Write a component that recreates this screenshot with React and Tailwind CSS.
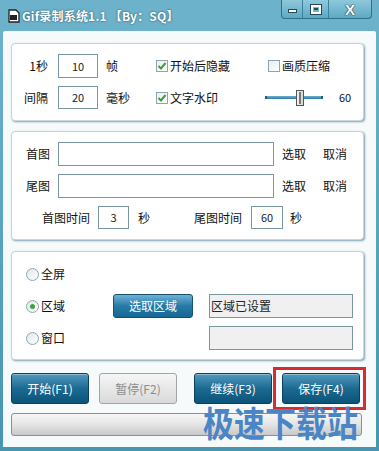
import React from "react";

const font = { fontFamily: '"SimSun", "Noto Sans CJK SC", "Liberation Sans", sans-serif' };

const Input = ({ w, h = "h-[24px]", value, gray }) => (
  <div
    className={`${w} ${h} flex items-center justify-center border border-[#7896a3] text-[11px] text-[#222] ${
      gray ? "bg-[#f0f0f0] justify-start pl-[1px] text-[12px]" : "bg-white"
    }`}
  >
    {value}
  </div>
);

const Check = ({ checked }) => (
  <div className="w-[12px] h-[12px] border border-[#8ea4ae] bg-gradient-to-br from-[#e8eef1] to-white flex items-center justify-center">
    {checked && (
      <svg width="10" height="10" viewBox="0 0 10 10">
        <path d="M1.5 5 L4 7.5 L8.5 2" stroke="#3f9b3c" strokeWidth="2" fill="none" />
      </svg>
    )}
  </div>
);

const Radio = ({ on }) => (
  <div className="w-[13px] h-[13px] rounded-full border border-[#8ea4ae] bg-gradient-to-br from-[#dfe6ea] to-white flex items-center justify-center">
    {on && <div className="w-[5px] h-[5px] rounded-full bg-[#3fa33a]" />}
  </div>
);

const BlueBtn = ({ children, w = "w-[78px]", h = "h-[31px]" }) => (
  <div
    className={`${w} ${h} rounded-[3px] border border-[#123f58] bg-gradient-to-b from-[#5199be] via-[#1b6a92] to-[#0b5479] flex items-center justify-center text-white text-[12px] leading-none shadow-[inset_0_1px_0_rgba(255,255,255,0.35)]`}
  >
    {children}
  </div>
);

const Panel = ({ children, className }) => (
  <div
    className={`ml-[8px] w-[353px] rounded-[4px] bg-white border border-[#c6d8de] shadow-[1px_1px_2px_rgba(30,90,110,0.55)] ${className}`}
  >
    {children}
  </div>
);

export default function App() {
  return (
    <div
      className="relative w-[379px] h-[451px] bg-gradient-to-b from-[#6db3cb] to-[#4795b1] flex flex-col text-[12px] text-[#111]"
      style={font}
    >
      {/* title bar */}
      <div className="relative h-[31px] flex items-center pl-[8px] shrink-0">
        <svg width="12" height="14" viewBox="0 0 12 14" className="mr-[2px]">
          <path d="M1 1 H8 L11 4 V13 H1 Z" fill="#fff" stroke="#222" strokeWidth="1.3" />
          <rect x="2" y="6" width="7" height="5" fill="#222" />
        </svg>
        <span
          className="text-white font-bold text-[12px] tracking-[0.2px] [text-shadow:0_0_2px_rgba(0,40,60,0.8)]"
          style={{ fontFamily: '"Noto Sans CJK SC", "Liberation Sans", sans-serif' }}
        >
          Gif录制系统1.1 【By：SQ】
        </span>
        <div className="absolute top-0 left-[281px] h-[19px] flex rounded-b-[4px] border border-t-0 border-[#2f6f88] bg-gradient-to-b from-[#8ec8db] to-[#5ea9c4] overflow-hidden">
          <div className="w-[21px] flex items-center justify-center border-r border-[#3f819a]">
            <div className="w-[9px] h-[4px] bg-white border border-[#25485a] mt-[3px]" />
          </div>
          <div className="w-[26px] flex items-center justify-center border-r border-[#3f819a]">
            <div className="w-[10px] h-[9px] border-2 border-white outline outline-1 outline-[#25485a] flex items-center justify-center">
              <div className="w-[4px] h-[2px] bg-[#25485a]" />
            </div>
          </div>
          <div className="w-[42px] flex items-center justify-center">
            <span
              className="text-white font-bold text-[15px] leading-none [text-shadow:0_0_1px_#1d3c4c,0_0_1px_#1d3c4c,0_0_1px_#1d3c4c]"
              style={{ fontFamily: '"Liberation Sans", sans-serif' }}
            >
              X
            </span>
          </div>
        </div>
      </div>

      {/* body */}
      <div className="flex-1 mx-[3px] mb-[4px] bg-[#f6fafb] rounded-t-[2px] flex flex-col pt-[12px]">
        {/* panel 1 */}
        <Panel className="h-[78px] pt-[10px] flex flex-col gap-[8px]">
          <div className="flex items-center h-[24px]">
            <div className="w-[36px] text-right">1秒</div>
            <div className="w-[10px]" />
            <Input w="w-[40px]" value="10" />
            <div className="w-[58px] pl-[8px]">帧</div>
            <div className="w-[112px] flex items-center gap-[2px]">
              <Check checked />
              <span>开始后隐藏</span>
            </div>
            <div className="flex items-center gap-[2px]">
              <Check />
              <span>画质压缩</span>
            </div>
          </div>
          <div className="flex items-center h-[23px]">
            <div className="w-[36px] text-right">间隔</div>
            <div className="w-[10px]" />
            <Input w="w-[40px]" h="h-[23px]" value="20" />
            <div className="w-[58px] pl-[8px]">毫秒</div>
            <div className="w-[109px] flex items-center gap-[2px]">
              <Check checked />
              <span>文字水印</span>
            </div>
            <div className="relative w-[58px] h-[16px] flex items-center">
              <div className="w-full h-[3px] bg-gradient-to-b from-[#6eaed0] to-[#2d7aa6] border-x-2 border-[#245f82]" />
              <div className="absolute left-[31px] top-0 w-[8px] h-[16px] border border-[#555] bg-gradient-to-r from-[#f4f4f4] to-[#d6d6d6] flex justify-center">
                <div className="w-[2px] h-[12px] mt-[1px] border border-[#777]" />
              </div>
            </div>
            <span className="ml-[16px] text-[11px]">60</span>
          </div>
        </Panel>

        {/* panel 2 */}
        <Panel className="mt-[10px] h-[109px] pt-[10px] flex flex-col gap-[8px]">
          {["首图", "尾图"].map((t) => (
            <div key={t} className="flex items-center h-[24px]">
              <div className="w-[38px] text-right">{t}</div>
              <div className="w-[8px]" />
              <Input w="w-[216px]" value="" />
              <span className="ml-[8px]">选取</span>
              <span className="ml-[17px]">取消</span>
            </div>
          ))}
          <div className="flex items-center h-[23px]">
            <div className="w-[78px] text-right">首图时间</div>
            <div className="w-[8px]" />
            <Input w="w-[31px]" h="h-[23px]" value="3" />
            <span className="ml-[9px]">秒</span>
            <div className="w-[44px]" />
            <span>尾图时间</span>
            <div className="w-[9px]" />
            <Input w="w-[32px]" h="h-[23px]" value="60" />
            <span className="ml-[7px]">秒</span>
          </div>
        </Panel>

        {/* panel 3 */}
        <Panel className="mt-[11px] h-[109px] pt-[10px] flex flex-col gap-[8px]">
          <div className="flex items-center h-[24px] pl-[14px] gap-[2px]">
            <Radio />
            <span>全屏</span>
          </div>
          <div className="flex items-center h-[24px] pl-[14px]">
            <Radio on />
            <span className="ml-[2px] w-[72px]">区域</span>
            <div className="w-[80px] h-[24px] rounded-[3px] border border-[#14506f] bg-gradient-to-b from-[#6cb2d6] via-[#267aa6] to-[#176995] flex items-center justify-center text-white text-[12px]">
              选取区域
            </div>
            <div className="w-[16px]" />
            <Input w="w-[144px]" value="区域已设置" gray />
          </div>
          <div className="flex items-center h-[24px] pl-[14px]">
            <Radio />
            <span className="ml-[2px] w-[168px]">窗口</span>
            <Input w="w-[144px]" value="" gray />
          </div>
        </Panel>

        {/* buttons */}
        <div className="mt-[13px] pl-[8px] flex items-center">
          <BlueBtn>开始(F1)</BlueBtn>
          <div className="ml-[10px] w-[78px] h-[31px] rounded-[3px] border border-[#a4a4a4] bg-gradient-to-b from-[#f6f6f6] to-[#d9d9d9] flex items-center justify-center text-[#8c8c8c] text-[12px] leading-none">
            暂停(F2)
          </div>
          <div className="ml-[17px]">
            <BlueBtn>继续(F3)</BlueBtn>
          </div>
          <div className="ml-[10px] relative">
            <BlueBtn>保存(F4)</BlueBtn>
            <div className="absolute -left-[9px] -top-[6px] w-[93px] h-[43px] border-[3px] border-[#d82a30]" />
          </div>
        </div>

        {/* progress */}
        <div className="mt-[9px] ml-[8px] w-[351px] h-[23px] rounded-[3px] border border-[#8f8f8f] bg-gradient-to-b from-[#f7f7f7] via-[#e4e4e4] to-[#c9c9c9]" />
      </div>

      {/* watermark */}
      <div
        className="absolute left-[203px] top-[404px] text-[31px] font-bold leading-none text-[#4a85c6] origin-top scale-y-[1.15]"
        style={{ fontFamily: '"Noto Sans CJK SC", sans-serif' }}
      >
        极速下载站
      </div>
    </div>
  );
}
